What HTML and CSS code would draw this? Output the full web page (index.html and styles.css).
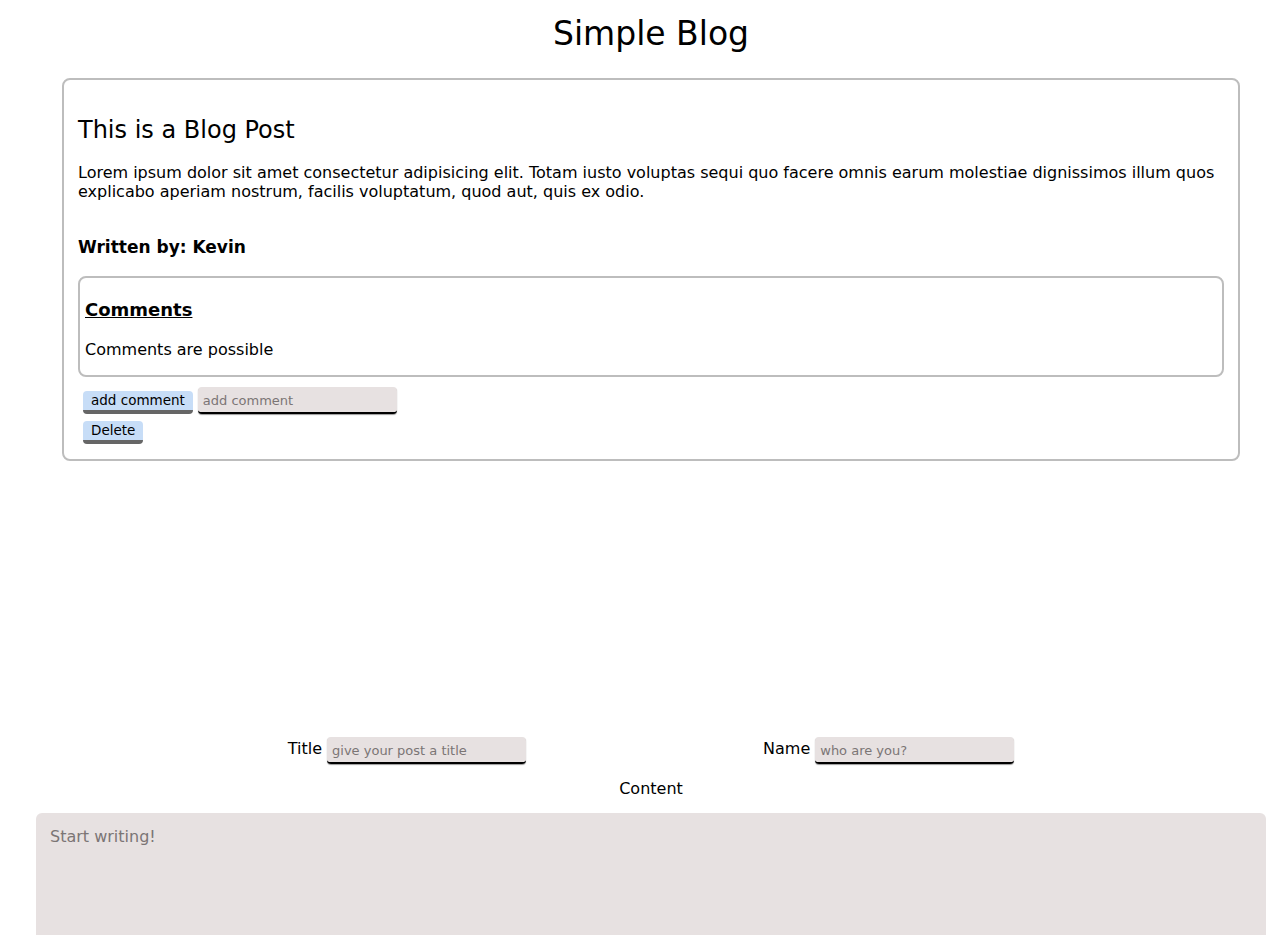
FILE: index.html
```html
<!DOCTYPE html>
<html lang="en">
<head>
<meta charset="utf-8">
<title>Simple Blog</title>
<link rel="stylesheet" href="styles.css">
</head>
<body>
<div class="page">
  <h1 class="site-title">Simple Blog</h1>

  <article class="post">
    <h2 class="post-title">This is a Blog Post</h2>
    <p class="post-body">Lorem ipsum dolor sit amet consectetur adipisicing elit. Totam iusto voluptas sequi quo facere omnis earum molestiae dignissimos illum quos explicabo aperiam nostrum, facilis voluptatum, quod aut, quis ex odio.</p>
    <h3 class="post-author">Written by: Kevin</h3>

    <section class="comments">
      <h3 class="comments-title">Comments</h3>
      <p class="comment">Comments are possible</p>
    </section>

    <div class="comment-form">
      <button class="btn" type="button">add comment</button>
      <input class="field field-small" type="text" placeholder="add comment">
    </div>
    <div class="post-actions">
      <button class="btn" type="button">Delete</button>
    </div>
  </article>

  <form class="new-post">
    <div class="new-post-row">
      <label class="group"><span class="label">Title</span><input class="field" type="text" placeholder="give your post a title"></label>
      <label class="group"><span class="label">Name</span><input class="field" type="text" placeholder="who are you?"></label>
    </div>
    <div class="content-label">Content</div>
    <textarea class="content" placeholder="Start writing!"></textarea>
  </form>
</div>
</body>
</html>
```

FILE: styles.css
```css
html, body {
  margin: 0;
  padding: 0;
  overflow: hidden;
  background: #fff;
}

body {
  font-family: "DejaVu Sans", "Open Sans", sans-serif;
  font-size: 16px;
  color: #000;
}

.page {
  width: 1302px;
}

.site-title {
  margin: 0;
  padding-top: 15px;
  height: 78px;
  box-sizing: border-box;
  text-align: center;
  font-size: 33px;
  font-weight: 400;
  line-height: 38px;
}

.post {
  margin: 0 62px;
  border: 2px solid #bdbdbd;
  border-radius: 8px;
  padding: 35px 14px 15px 14px;
}

.post-title {
  margin: 0;
  font-size: 24px;
  font-weight: 400;
  line-height: 30px;
}

.post-body {
  margin: 18px 0 0;
  font-size: 16px;
  line-height: 19px;
}

.post-author {
  margin: 35px 0 0;
  font-size: 17px;
  font-weight: 600;
  line-height: 22px;
}

.comments {
  margin-top: 18px;
  border: 2px solid #bdbdbd;
  border-radius: 8px;
  padding: 21px 5px 15px 5px;
}

.comments-title {
  margin: 0;
  font-size: 18px;
  font-weight: 600;
  line-height: 22px;
  text-decoration: underline;
}

.comment {
  margin: 19px 0 0;
  font-size: 16px;
  line-height: 20px;
}

.comment-form {
  display: flex;
  align-items: flex-end;
  gap: 5px;
  margin: 10px 0 0 5px;
}

.post-actions {
  margin: 6px 0 0 5px;
}

.btn {
  font-family: inherit;
  font-size: 13.5px;
  color: #000;
  background: #c7ddf7;
  border: none;
  border-bottom: 4px solid #666;
  border-radius: 4px;
  padding: 0 8px;
  height: 23px;
  line-height: 19px;
  cursor: pointer;
}

.btn-wide {
  padding: 0 9px;
}

.field {
  font-family: inherit;
  font-size: 13px;
  background: #e7e1e1;
  border: none;
  border-bottom: 2px solid #000;
  border-radius: 4px;
  box-shadow: 0 1px 1px rgba(0,0,0,0.4);
  width: 199px;
  height: 27px;
  box-sizing: border-box;
  padding: 2px 5px 0;
  color: #000;
}

.field::placeholder {
  color: #7b7575;
}

.new-post {
  margin-top: 276px;
}

.new-post-row {
  display: flex;
  justify-content: center;
  gap: 237px;
}

.group {
  display: flex;
  align-items: center;
  gap: 5px;
}

.label {
  font-size: 16px;
  line-height: 20px;
  padding-bottom: 3px;
}

.content-label {
  text-align: center;
  margin-top: 15px;
  line-height: 20px;
  font-size: 16px;
}

.content {
  display: block;
  margin: 14px 36px 0 36px;
  width: 1230px;
  height: 200px;
  box-sizing: border-box;
  background: #e7e1e1;
  border: none;
  border-radius: 6px;
  padding: 14px;
  font-family: inherit;
  font-size: 16px;
  resize: none;
}

.content::placeholder {
  color: #7b7575;
}
```
